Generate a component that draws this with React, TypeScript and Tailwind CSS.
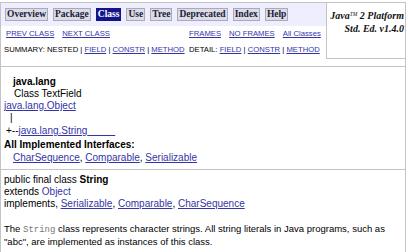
const LINK = "text-[#3434a8]";

function NavButton({ label, active }: { label: string; active?: boolean }) {
  return (
    <div
      className={
        active
          ? "h-[13px] px-[1px] flex items-center bg-[#14148a] text-white border border-[#14148a]"
          : "h-[13px] px-[1px] flex items-center bg-[#dcdce6] text-[#1a1a3a] border border-[#a9a9b8]"
      }
    >
      <span className="font-bold text-[9.5px] leading-none" style={{ fontFamily: '"Liberation Serif", serif' }}>
        {label}
      </span>
    </div>
  );
}

export default function App() {
  const nav = ["Overview", "Package", "Class", "Use", "Tree", "Deprecated", "Index", "Help"];

  return (
    <div
      className="w-[408px] h-[252px] bg-white overflow-hidden text-black"
      style={{ fontFamily: '"Liberation Sans", Arial, sans-serif' }}
    >
      <div className="mt-[2px] w-[406px] border-t border-l border-r border-[#c4c4c4] h-[250px]">
        {/* header table */}
        <div className="flex">
          <div className="w-[325px]">
            <div className="h-[23px] bg-[#eeeeff] flex items-center gap-[5px] pl-[4px]">
              {nav.map((n) => (
                <NavButton key={n} label={n} active={n === "Class"} />
              ))}
            </div>
            <div className="h-[15px] flex items-end text-[7.7px] leading-none pb-[3px]">
              <div className="w-[188px] pl-[5px] flex gap-[8px]">
                <a className={`${LINK} underline`}>PREV CLASS</a>
                <a className={`${LINK} underline`}>NEXT CLASS</a>
              </div>
              <div className="flex gap-[8px]">
                <a className={`${LINK} underline`}>FRAMES</a>
                <a className={`${LINK} underline`}>NO FRAMES</a>
                <a className={`${LINK} underline`}>All Classes</a>
              </div>
            </div>
            <div className="h-[17px] flex items-end text-[7.7px] leading-none pb-[4px]">
              <div className="w-[188px] pl-[3px]">
                SUMMARY: NESTED | <a className={`${LINK} underline`}>FIELD</a> |{" "}
                <a className={`${LINK} underline`}>CONSTR</a> | <a className={`${LINK} underline`}>METHOD</a>
              </div>
              <div>
                DETAIL: <a className={`${LINK} underline`}>FIELD</a> |{" "}
                <a className={`${LINK} underline`}>CONSTR</a> | <a className={`${LINK} underline`}>METHOD</a>
              </div>
            </div>
          </div>
          <div className="flex-1 h-[56px] border-l border-b border-[#c4c4c4] text-right pt-[6px] pr-[1px]">
            <div
              className="font-bold italic text-[10px] leading-[13px] text-[#111]"
              style={{ fontFamily: '"Liberation Serif", serif' }}
            >
              Java<sup className="text-[5.5px] font-normal">TM</sup> 2 Platform
              <br />
              Std. Ed. v1.4.0
            </div>
          </div>
        </div>

        <div className="mt-[7px] border-t border-[#c4c4c4]" />

        {/* class header */}
        <div className="text-[10px] leading-[12px] pt-[9px]">
          <div className="pl-[12px] font-bold">java.lang</div>
          <div className="pl-[13px]">Class TextField</div>
          <div className="pl-[3px]">
            <a className={`${LINK} underline`}>java.lang.Object</a>
          </div>
          <div className="pl-[9px] h-[13px]">|</div>
          <div className="pl-[5px] h-[14px]">
            +--<a className={`${LINK} underline`}>java.lang.String{"\u00a0".repeat(10)}</a>
          </div>
          <div className="pl-[3px] font-bold h-[13px]">All Implemented Interfaces:</div>
          <div className="pl-[12px] h-[13px]">
            <a className={`${LINK} underline`}>CharSequence</a>, <a className={`${LINK} underline`}>Comparable</a>,{" "}
            <a className={`${LINK} underline`}>Serializable</a>
          </div>
        </div>

        <div className="mt-[4px] border-t border-[#c4c4c4]" />

        <div className="text-[10px] leading-[12px] pt-[4px] pl-[3px]">
          <div>
            public final class <b>String</b>
          </div>
          <div>
            extends <a className={LINK}>Object</a>
          </div>
          <div>
            implements, <a className={`${LINK} underline`}>Serializable</a>,{" "}
            <a className={`${LINK} underline`}>Comparable</a>, <a className={`${LINK} underline`}>CharSequence</a>
          </div>
          <div className="mt-[13px] text-[9.5px] leading-[11px]">
            The{" "}
            <span className="text-[9px] text-[#7a7a7a]" style={{ fontFamily: '"Liberation Mono", monospace' }}>
              String
            </span>{" "}
            class represents character strings. All string literals in Java programs, such as
            <br />
            "abc", are implemented as instances of this class.
          </div>
        </div>
      </div>
    </div>
  );
}
